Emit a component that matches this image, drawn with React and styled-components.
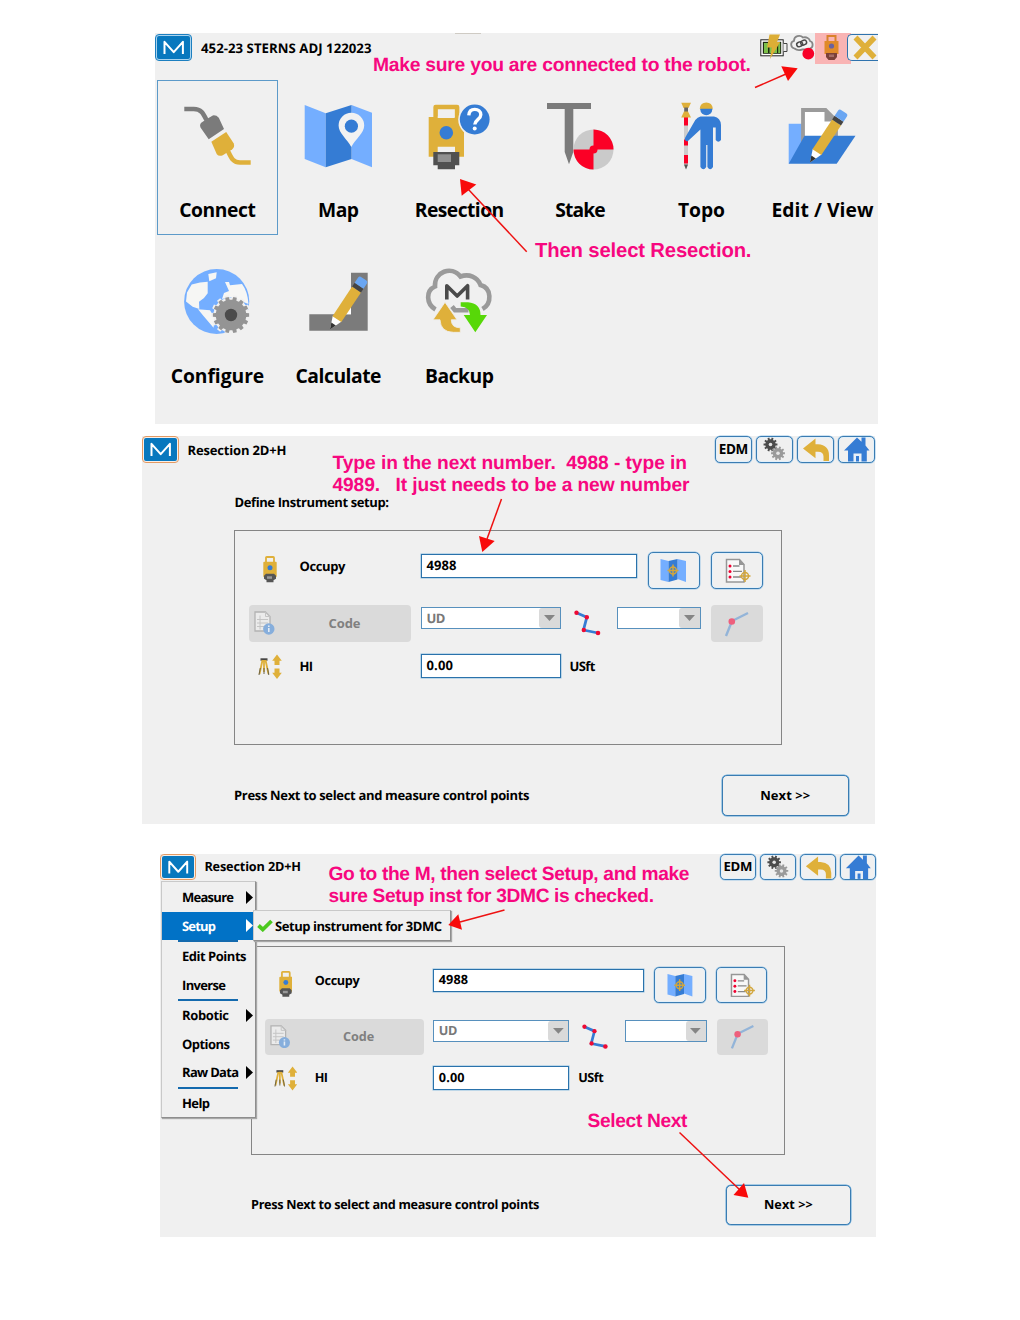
import React, { useLayoutEffect, useRef } from "react";
import styled, { createGlobalStyle, css } from "styled-components";

/* Lengths in a screen are multiples of its own unit, so a screen can be shown at any scale. */
const u = (n) => `calc(var(--u) * ${n})`;

const Global = createGlobalStyle`
  *, *::before, *::after { box-sizing: border-box; }
  body { margin: 0; background: #fff; }
  svg { display: block; flex: none; }
`;

const Page = styled.main`
  --u: 1px;
  position: relative;
  width: 1020px;
  height: 1320px;
  padding-top: 33px;
  overflow: hidden;
  font-family: "Open Sans", "Noto Sans", sans-serif;
  font-weight: 700;
  color: #000;
  text-rendering: geometricPrecision;
`;

const Panel = styled.section`
  --u: ${(p) => p.$scale || 1}px;
  position: relative;
  width: ${(p) => p.$w}px;
  height: ${(p) => p.$h}px;
  margin: 0 0 ${(p) => p.$after || 0}px ${(p) => p.$left}px;
  background: #f0f0f0;
`;

const TextSpan = styled.span`
  display: inline-block;
  flex: none;
  font-size: ${(p) => u(p.$size)};
  line-height: ${(p) => u(p.$line || 18)};
  white-space: pre;
  color: ${(p) => p.$color || "inherit"};
`;

/* Tracks a line of text so that it fills the given width. */
function Text({ size = 13, w, line, color, children }) {
  const ref = useRef(null);
  useLayoutEffect(() => {
    const el = ref.current;
    const fit = () => {
      el.style.letterSpacing = "0";
      const fs = parseFloat(getComputedStyle(el).fontSize);
      const n = Math.max(1, children.length - 1);
      const em = (w / size - el.getBoundingClientRect().width / fs) / n;
      el.style.letterSpacing = `${em.toFixed(4)}em`;
      el.style.marginRight = `${(-em).toFixed(4)}em`;
    };
    if (w) fit();
  }, [children, size, w]);
  return (
    <TextSpan ref={ref} $size={size} $line={line} $color={color}>
      {children}
    </TextSpan>
  );
}

/* ---------- header ---------- */

const Header = styled.header`
  display: flex;
  align-items: flex-start;
  justify-content: space-between;
  height: ${(p) => u(p.$h)};
`;
const Brand = styled.div`
  display: flex;
  align-items: center;
  gap: ${(p) => u(p.$gap || 9)};
  padding-top: ${(p) => u(p.$top || 0)};
`;
const LogoBox = styled.div`
  width: ${u(37)};
  height: ${u(27)};
  padding: 1px;
  border: 1px solid ${(p) => p.$ring};
  border-radius: ${u(4)};
  background: ${(p) => p.$gap};
  svg { width: 100%; height: 100%; background: #0878be; border-radius: 2px; }
`;
const Logo = ({ ring, gap }) => (
  <LogoBox $ring={ring} $gap={gap}>
    <svg viewBox="0 0 33 23" preserveAspectRatio="none">
      <path d="M7.500 18V5.800l9.200 10.400 9.200-10.400V18" fill="none" stroke="#fff" strokeWidth="2" strokeLinejoin="round" />
    </svg>
  </LogoBox>
);

const Tray = styled.div`
  display: flex;
  align-items: flex-start;
`;
const RobotTray = styled.div`
  display: flex;
  justify-content: center;
  width: 36px;
  height: 31px;
  background: #f9b4b4;
`;
const CloseButton = styled.button`
  width: 31px;
  height: 27px;
  margin: 1px 0 0 -4px;
  padding: 0;
  border: 1px solid #2f73ae;
  border-right: 0;
  border-radius: 5px 0 0 5px;
  background: #f0f0f0;
`;
const CrestMark = styled.i`
  position: absolute;
  left: 300px;
  top: 0;
  width: 26px;
  height: 1px;
  background: #cfcbc4;
`;

const Battery = () => (
  <svg width="28" height="31" viewBox="0 0 28 31">
    <rect x=".8" y="6.800" width="22.400" height="16" fill="#fff" stroke="#222" />
    <rect x="2.800" y="8.800" width="18.400" height="12" fill="#1d2a12" />
    <path d="M4 10h4v10H4zM9.500 10h3v10h-3zM14 10h3v10h-3zM18.200 10h2v10h-2z" fill="#7cc04a" />
    <path d="M23.500 10.500h3.500v8h-3.500" fill="#f0f0f0" stroke="#444" />
    <path d="M9.500 1.500h10.500l-3 7.500h3.200L10 26l1.800-11.500H7z" fill="#dcae36" />
  </svg>
);
const LinkCloud = () => (
  <svg width="27" height="31" viewBox="-1 0 27 31">
    <path d="M5.500 15.500C1.500 14.500.8 9 5 7.800 5 3 11 1.500 14 4.500c3.500-1 6.500 1 7 3.500 3.500 1 3.500 6.500 0 7.500-3 1.500-6 1-7.500.8-2.500 1-6 .8-8-.8z" fill="#f3f3f3" stroke="#868686" strokeWidth="1.800" />
    <g fill="none" stroke="#4a4a4a" strokeWidth="1.500" transform="rotate(-22 12.500 10.500)">
      <rect x="7.500" y="8.300" width="6" height="4.400" rx="2.200" />
      <rect x="11.800" y="8.300" width="6" height="4.400" rx="2.200" />
    </g>
    <circle cx="19.300" cy="20.700" r="5.900" fill="#f80028" />
  </svg>
);
const TrayRobot = () => (
  <svg width="22" height="30" viewBox="2 0 18 30">
    <path d="M5.500 9V3h8v6" fill="none" stroke="#d9822c" strokeWidth="2" />
    <path d="M2.500 8h14v13h-14z" fill="#e08a2a" />
    <circle cx="9.500" cy="13" r="2.600" fill="#6a62a0" />
    <path d="M4 20h11v4l-2.500 3h-6L4 24z" fill="#7b4038" />
    <rect x="7" y="21.500" width="5" height="2.500" fill="#a56c66" />
  </svg>
);

/* ---------- main menu icons (72 x 72) ---------- */

const BLUE = "#357cd4";
const SKY = "#74aeff";
const GOLD = "#dfb03a";
const GREY = "#7b7b7b";

const Icon72Box = styled.svg`
  margin-left: -2px;
`;
const Icon72 = ({ children }) => (
  <Icon72Box width="72" height="72" viewBox="0 0 72 72">{children}</Icon72Box>
);
const Pencil = ({ x, y }) => (
  <g transform={`translate(${x} ${y}) rotate(33.600)`}>
    <path d="M0 0l-5.300-13h10.600z" fill="#fff" />
    <path d="M0 0l-2.700-6.500h5.400z" fill="#333" />
    <path d="M-5.300-12.500h10.600V-48H-5.300z" fill={GOLD} />
    <path d="M-5.300-48h10.600v-4.500H-5.300z" fill="#444" />
    <path d="M-5.300-52.500v-6q0-2.500 2.500-2.500h5.600q2.500 0 2.500 2.500v6z" fill="#6aa6f2" />
  </g>
);
const ConnectIcon = () => (
  <Icon72>
    <path d="M3.300 9h9.500C20 9 22 13 25.500 20" fill="none" stroke={GREY} strokeWidth="4.600" />
    <path d="M27.700 39.300L19.500 27.500q-1.500-3.500 1.800-5.500l5-3.300 5.500-3.300q3.500-.5 6 2.300l5.200 11.300z" fill={GREY} />
    <path d="M30.300 41.800L45.200 32l7.600 11.500q1.200 3.500-1.500 5.800l-9.500 6q-4 1.500-6-1z" fill={GOLD} />
    <path d="M46.500 50c3.500 7 5 12.500 12.500 12.500h10.700" fill="none" stroke={GOLD} strokeWidth="4.600" />
  </Icon72>
);
const MapIcon = () => (
  <Icon72>
    <path d="M2.700 5l21 8.300v54L2.700 59zM49.500 5L70 12.700v54.600L49.500 59z" fill={SKY} />
    <path d="M23.700 13.300L49.500 5v54l-25.800 8.300z" fill={BLUE} />
    <path d="M49.300 47C45 39 36.600 33 36.600 25.500a12.800 12.800 0 0 1 25.600 0C62.200 33 53.500 39 49.300 47z" fill="#f2f2f2" />
    <circle cx="49.400" cy="26.200" r="6.600" fill={BLUE} />
  </Icon72>
);
const ResectionIcon = () => (
  <Icon72>
    <path d="M12.600 18V7h21.500v11" fill="none" stroke={GOLD} strokeWidth="4.500" strokeLinejoin="round" />
    <path d="M5.700 17H41v39.700H5.700z" fill={GOLD} />
    <path d="M14.700 16.500h17v1.500h-17zM14.700 46.700h17.300v6H14.700z" fill="#f0f0f0" />
    <circle cx="23.300" cy="32.700" r="6.800" fill={BLUE} />
    <path d="M10.300 52h26v13.300H32v4H14.700v-4h-4.400z" fill="#505050" />
    <path d="M14.700 54.300H28V62H14.700z" fill="#909090" />
    <circle cx="51.700" cy="19.500" r="16.500" fill="#f0f0f0" />
    <circle cx="51.700" cy="19.500" r="14.900" fill={BLUE} />
    <path d="M45.800 15.300c.3-4 2.700-5.900 6-5.900s6 2 6 5.300c0 4.800-6 5-6 9.800" fill="none" stroke="#fff" strokeWidth="3.400" />
    <circle cx="51.700" cy="28.600" r="2" fill="#fff" />
  </Icon72>
);
const StakeIcon = () => (
  <Icon72>
    <path d="M3 3h44v6H29.300v43L25 64.300 20.700 52V9H3z" fill={GREY} />
    <circle cx="49.500" cy="49.500" r="20" fill="#cacaca" />
    <path d="M49.500 49.500v-20a20 20 0 0 1 20 20zM49.500 49.500v20a20 20 0 0 1-20-20z" fill="#fb0026" />
    <circle cx="49.500" cy="49.500" r="4" fill="#fb0026" />
  </Icon72>
);
const TopoIcon = () => (
  <Icon72>
    <path d="M19 17h4v48l-2 4-2-4z" fill="#cdcdcd" />
    <path d="M19 17h4v8.500h-4zM19 39.500h4v6h-4zM19 55h4v8.500h-4z" fill="#fb0026" />
    <path d="M19 64.500h4l-2 5z" fill="#555" />
    <path d="M16.300 2.700H26L23.500 8h-5z" fill={GOLD} />
    <path d="M19.200 7.500H23V12h-3.800z" fill="#666" />
    <path d="M19 11.500h4l3 6h-9.800z" fill={GOLD} />
    <circle cx="41.300" cy="9.300" r="6" fill={BLUE} />
    <path d="M34.700 8.800q.8-6.200 6.600-6.200t6.600 6.200z" fill={GOLD} />
    <path d="M35.500 16.500H49q6.500 1 7 8.500v15q-2.700 3.500-5.300 0V27.500H48V67q-2.800 4.500-5.600 0V45h-1.200v22q-2.800 4.500-5.800 0V29.500l-13 12q-4-1-1.900-4.500L30.300 20q2.200-3 5.200-3.500z" fill={BLUE} />
  </Icon72>
);
const EditIcon = () => (
  <Icon72>
    <path d="M2.700 23.700H18v30L2.700 63.700z" fill={SKY} />
    <path d="M17 48V10h22.500l10.500 10.500V48z" fill="#fff" stroke="#9b9b9b" strokeWidth="3.800" />
    <path d="M38.500 9v12.500H51z" fill="#9b9b9b" />
    <path d="M18.500 35.700h51L50.700 63.700h-48z" fill={BLUE} />
    <Pencil x={24} y={62.500} />
  </Icon72>
);
const gearPath = (cx, cy, r, depth, n) => {
  const pts = [];
  for (let i = 0; i < n; i++) {
    [[-0.3, r - depth], [-0.22, r], [0.22, r], [0.3, r - depth]].forEach(([o, rr]) => {
      const a = ((i + o) / n) * Math.PI * 2;
      pts.push(`${(cx + rr * Math.cos(a)).toFixed(2)} ${(cy + rr * Math.sin(a)).toFixed(2)}`);
    });
  }
  return `M${pts.join("L")}z`;
};
const ConfigureIcon = () => (
  <Icon72>
    <circle cx="35.700" cy="35.500" r="32.600" fill={SKY} />
    <g fill="#f6f6f4">
      <path d="M19 16.500l7.700-.8v11.600L23 32l-5 3.700.3 7.300-6.600-2.300L5 35.500l1-9 4.700-8zM27.300 8l8.400-1.700L35 12.300l-6.700 3zM17 43.300l12 1 5 8-1.500 9.500-10-11.800zM44 16h4l1 3.200 12-1.200q5.500 7 6.500 20L49 31l-8 2 2-6 5-2z" />
    </g>
    <path d={gearPath(50, 49, 20, 2.4, 14)} fill="#f0f0f0" />
    <path d={gearPath(50, 49, 18.2, 2.9, 14)} fill="#949494" />
    <circle cx="50" cy="49" r="6.200" fill="#4b4b4b" />
  </Icon72>
);
const CalculateIcon = () => (
  <Icon72>
    <path d="M49 6.700h16.700v58H7.300V48.300H49z" fill={GREY} />
    <path d="M49 40v8.300h-7z" fill="#fff" />
    <Pencil x={28} y={63.5} />
  </Icon72>
);
const BackupIcon = () => (
  <Icon72>
    <path d="M12.500 43.500C3 38 2.500 24.500 12 20.500 11 6 28.500-1 37.500 10.500c8.500-3 17 .5 20 8.500C69 22 69 37.500 59.500 43M29 40.500l3 3.700h13.500" fill="none" stroke="#9a9a9a" strokeWidth="4.600" />
    <path d="M23.800 33.500V19.700l10.400 10.300L44.600 19.700v13.800" fill="none" stroke="#4a4a4a" strokeWidth="3.600" strokeLinejoin="round" />
    <path d="M22 36.300l12 17.500h-5.700q0 8 9 8v4.500h-7Q17.500 66 17 53.800h-7z" fill={GOLD} stroke="#f0f0f0" strokeWidth=".8" />
    <path d="M37.700 36.300H45q12.500 1 12.500 12.700H64L52.300 66.300 40.700 49H47q0-8-9.300-8.500z" fill="#57d808" />
  </Icon72>
);

/* ---------- main menu ---------- */

const Tiles = styled.div`
  display: grid;
  grid-template-columns: repeat(6, 121px);
  grid-auto-rows: 166px;
  padding-left: 2px;
`;
const Tile = styled.button`
  display: flex;
  flex-direction: column;
  align-items: center;
  gap: 24.500px;
  width: 121px;
  height: 155px;
  padding: 19px 0 0;
  border: 1px solid ${(p) => (p.$active ? "#5c9ac9" : "transparent")};
  background: none;
  font: inherit;
  color: inherit;
`;
const tiles = [
  ["Connect", 76.5, ConnectIcon],
  ["Map", 41, MapIcon],
  ["Resection", 89.5, ResectionIcon],
  ["Stake", 50.5, StakeIcon],
  ["Topo", 47, TopoIcon],
  ["Edit / View", 102, EditIcon],
  ["Configure", 93.5, ConfigureIcon],
  ["Calculate", 86, CalculateIcon],
  ["Backup", 69, BackupIcon],
];

function MainScreen() {
  return (
    <Panel $left={155} $w={723} $h={391} $after={12}>
      <CrestMark />
      <Header $h={47}>
        <Brand $top={1}>
          <Logo ring="#1c7fc0" gap="#a9d3ee" />
          <Text size={13.200} w={170.500}>452-23 STERNS ADJ 122023</Text>
        </Brand>
        <Tray>
          <Battery />
          <LinkCloud />
          <RobotTray><TrayRobot /></RobotTray>
          <CloseButton aria-label="Close">
            <svg width="30" height="25" viewBox="-1 0 30 25">
              <path d="M6.500 2.500L25.500 22.500M25.500 2.500L6.500 22.500" stroke={GOLD} strokeWidth="5.500" />
            </svg>
          </CloseButton>
        </Tray>
      </Header>
      <Tiles>
        {tiles.map(([name, w, Icon], i) => (
          <Tile key={name} $active={i === 0}>
            <Icon />
            <Text size={19.300} w={w} line={26}>{name}</Text>
          </Tile>
        ))}
      </Tiles>
    </Panel>
  );
}

/* ---------- resection screen ---------- */

const Tools = styled.div`
  display: flex;
  gap: ${u(4)};
`;
const outlined = css`
  display: flex;
  align-items: center;
  justify-content: center;
  padding: 0;
  border: 1px solid #3a7cb2;
  border-radius: ${u(5)};
  box-shadow: inset 0 0 0 1px #e2f0fa, 0 0 0 0.5px #9cc6e6;
  background: #f0f0f0;
  font: inherit;
  color: inherit;
`;
const ToolButton = styled.button`
  ${outlined}
  width: ${u(37)};
  height: ${u(26.5)};
  svg { width: ${u(35)}; height: ${u(26)}; }
`;
const Intro = styled.div`
  display: flex;
  align-items: center;
  height: ${u(18)};
  margin: 0 0 ${u(19)} ${u(92.5)};
`;
const Group = styled.div`
  display: flex;
  flex-direction: column;
  width: ${(p) => p.$w}px;
  height: ${u(214.5)};
  margin-left: ${(p) => p.$inset}px;
  padding: ${u(20.5)} 0 0 ${(p) => p.$pad}px;
  border: 1px solid #858585;
`;
const Row = styled.div`
  display: flex;
  align-items: flex-start;
  height: ${(p) => u(p.$h)};
`;
const Lead = styled.div`
  display: flex;
  align-items: center;
  width: ${u(172)};
  height: ${u(28)};
  margin-top: ${(p) => u(p.$top || 0)};
`;
const IconSlot = styled.div`
  display: flex;
  justify-content: center;
  width: ${u(42)};
  margin: ${(p) => u(p.$drop || 0)} ${u(9)} 0 0;
`;
const Glyph = styled.svg`
  width: ${(p) => u(p.$w)};
  height: ${(p) => u(p.$h)};
  margin: ${(p) => p.$m || 0};
`;
const CodeButton = styled.button`
  display: flex;
  align-items: center;
  width: ${u(162.500)};
  height: ${u(36.500)};
  margin-right: ${u(9.500)};
  padding: 0 0 0 ${u(5)};
  border: 0;
  border-radius: ${u(4)};
  background: #dadada;
  font: inherit;
  span { margin-left: ${u(54)}; }
`;
const Field = styled.div`
  display: flex;
  align-items: center;
  width: ${(p) => u(p.$w)};
  height: ${u(24)};
  margin-top: ${(p) => u(p.$top || 0)};
  padding: 0 0 ${u(1)} ${u(5)};
  border: 1px solid #2a72ab;
  box-shadow: 0 0 0 0.5px #8bbde0;
  background: #fff;
`;
const Select = styled.div`
  display: flex;
  align-items: center;
  justify-content: space-between;
  width: ${(p) => u(p.$w)};
  height: ${u(22)};
  margin-top: ${u(1.5)};
  padding-left: ${u(5)};
  border: 1px solid #5790bd;
  background: #fff;
`;
const Drop = styled.div`
  display: flex;
  align-items: center;
  justify-content: center;
  width: ${u(20.500)};
  height: 100%;
  margin-left: auto;
  border-radius: 3px 0 0 3px;
  background: #dadada;
`;
const SideButton = styled.button`
  ${outlined}
  width: ${u(52.500)};
  height: ${u(37)};
  margin-left: ${(p) => u(p.$gap)};
`;
const MutedButton = styled(SideButton)`
  border: 0;
  box-shadow: none;
  border-radius: ${u(4)};
  background: #dadada;
`;
const Footer = styled.footer`
  display: flex;
  align-items: center;
  justify-content: space-between;
  height: ${u(41.500)};
  margin: ${u(30)} ${u(26)} 0 ${(p) => p.$inset}px;
`;
const NextButton = styled.button`
  ${outlined}
  width: ${u(127.5)};
  height: ${u(41)};
  box-shadow: 0 0 0 0.5px #5fa5d8;
`;
const Unit = styled.div`
  display: flex;
  align-items: center;
  height: ${u(24)};
  margin-left: ${u(9)};
`;

const GearsIcon = () => (
  <svg viewBox="0 0 35 26">
    <path d={gearPath(13.5, 8.5, 7, 1.8, 10)} fill="#4c4c4c" />
    <circle cx="13.500" cy="8.500" r="1.800" fill="#e6e6e6" />
    <path d={gearPath(21, 17.3, 7, 1.8, 10)} fill="#9a9a9a" />
    <circle cx="21" cy="17.300" r="1.800" fill="#e6e6e6" />
  </svg>
);
const BackIcon = () => (
  <svg viewBox="0 0 35 26">
    <path d="M5 12.500L17.500 2.500v5.800h2.500Q31 9 31 19.500v5.500h-5.500V20.500q0-4.500-5.500-4.700h-2.500v6.500z" fill={GOLD} />
  </svg>
);
const HomeIcon = () => (
  <svg viewBox="0 0 35 26">
    <path d="M5 14.500L18 1.500l4.500 4.300V1.500h4v8l4 5h-2.700V25.500h-5.300v-8h-8v8H9V14.500z" fill={BLUE} />
    <path d="M15.300 18.300h6.400v7.200h-6.400z" fill="#e6f0fa" />
    <path d="M17 20h3v5.500h-3z" fill={BLUE} />
  </svg>
);
const RobotIcon = () => (
  <Glyph $w={14} $h={27} viewBox="0 0 14 27">
    <path d="M3 7V1.800q0-.8.8-.8h6.400q.8 0 .8.800V7" fill="none" stroke={GOLD} strokeWidth="1.800" />
    <rect x=".3" y="5.800" width="13.400" height="15.500" rx="1" fill={GOLD} />
    <circle cx="7" cy="11.800" r="2.500" fill={BLUE} />
    <path d="M3 17.800h8l2 2v3l-2.500 1.500v2h-7v-2L1 22.800v-3z" fill="#555" />
    <rect x="4" y="20.300" width="5" height="2.500" fill="#999" />
  </Glyph>
);
const HeightIcon = () => (
  <Glyph $w={24} $h={26} viewBox="0 0 24 26">
    <path d="M2.500 5.500h7" stroke="#444" strokeWidth="2.400" />
    <path d="M4.500 6L1.500 20M6 6v12M7.500 6l3 14" fill="none" stroke={GOLD} strokeWidth="1.800" />
    <path d="M2.300 14L1 21M6 14v6M9.500 14l1.300 7" fill="none" stroke="#6b6348" strokeWidth="1" />
    <path d="M19 .5l4.800 6.300H21.500V11h-5V6.800h-2.300zM19 25l4.800-6.300H21.500V14.500h-5v4.200h-2.300z" fill={GOLD} />
  </Glyph>
);
const CodeIcon = () => (
  <Glyph $w={21} $h={24} viewBox="0 0 21 24">
    <path d="M1 1h10.500l4.500 4.500V20H1z" fill="#ebebeb" stroke="#b3b3b3" strokeWidth="1.300" />
    <path d="M11.500 1v4.500H16zM3 8.500h11M3 12h11M3 15.500h8M6 4.500v14" fill="none" stroke="#c4c4c4" />
    <circle cx="14.800" cy="18" r="5.700" fill="#86aedc" />
    <path d="M14.800 17v4M14.800 14.500v1.500" stroke="#e4ecf5" strokeWidth="1.600" />
  </Glyph>
);
const Target = ({ x, y }) => (
  <g transform={`translate(${x} ${y})`} fill="none" stroke="#d2a63c" strokeWidth="1.500">
    <circle r="3.500" />
    <path d="M-5.500 0h11M0-6v12" />
  </g>
);
const MapTargetIcon = () => (
  <Glyph $w={27} $h={25} viewBox="0 0 27 25">
    <path d="M.5 1l8 2v21l-8-2zM17.500 1l8.500 2v21l-8.500-3z" fill={SKY} />
    <path d="M8.500 3l9-2v20.500l-9 2.500z" fill={BLUE} />
    <Target x={13} y={12.5} />
  </Glyph>
);
const ListTargetIcon = () => (
  <Glyph $w={26} $h={25} viewBox="0 0 26 25" $m="0 0 0 2px">
    <path d="M1.500 1.500h13l4.500 5V24H1.500z" fill="#f8f8f8" stroke="#969696" strokeWidth="1.500" />
    <path d="M14 1v6h5.500z" fill="#969696" />
    <path d="M8 8h6.500M8 13.300h9M8 19h8" stroke="#888" strokeWidth="1.300" />
    <g fill="#f00030"><circle cx="5" cy="8" r="1.500" /><circle cx="5" cy="13.500" r="1.500" /><circle cx="5" cy="19" r="1.500" /></g>
    <Target x={20} y={18} />
  </Glyph>
);
const PolylineIcon = () => (
  <Glyph $w={27} $h={26} viewBox="0 0 27 26" $m="5px 16px 0 13px">
    <path d="M2.500 2.800l10.300 4.500L9.500 20l14.500 3" fill="none" stroke={BLUE} strokeWidth="2.800" />
    <g fill="#ee0a34"><circle cx="2.500" cy="2.800" r="2.200" /><circle cx="12.800" cy="7.300" r="2.200" /><circle cx="9.800" cy="20" r="2.200" /><circle cx="24" cy="23" r="2.300" /></g>
  </Glyph>
);
const AngleIcon = () => (
  <Glyph $w={28} $h={28} viewBox="1 0 28 28">
    <path d="M4 26l6-15L26 3" fill="none" stroke="#93b4d8" strokeWidth="2.400" />
    <circle cx="9.800" cy="11.500" r="3.300" fill="#ee5f7c" />
  </Glyph>
);
const DropArrow = () => (
  <Glyph $w={11} $h={6} viewBox="0 0 11 6"><path d="M0 0h11L5.500 6z" fill="#858585" /></Glyph>
);

function ResectionScreen({ panel, group, intro, children }) {
  return (
    <Panel {...panel}>
      <Header $h={57}>
        <Brand $gap={8.5}>
          <Logo ring="#e39a63" gap="#f8efe8" />
          <Text size={13} w={99}>Resection 2D+H</Text>
        </Brand>
        <Tools>
          <ToolButton><Text size={13.500} w={29.500}>EDM</Text></ToolButton>
          <ToolButton aria-label="Settings"><GearsIcon /></ToolButton>
          <ToolButton aria-label="Back"><BackIcon /></ToolButton>
          <ToolButton aria-label="Home"><HomeIcon /></ToolButton>
        </Tools>
      </Header>
      <Intro>{intro && <Text size={13} w={154.500}>{intro}</Text>}</Intro>
      <Group {...group}>
        <Row $h={53.5}>
          <Lead>
            <IconSlot $drop={8}><RobotIcon /></IconSlot>
            <Text size={13} w={46}>Occupy</Text>
          </Lead>
          <Field $w={216.5} $top={2}><Text size={13} w={30}>4988</Text></Field>
          <SideButton $gap={10.500} aria-label="Pick on map"><MapTargetIcon /></SideButton>
          <SideButton $gap={10.500} aria-label="Pick from list"><ListTargetIcon /></SideButton>
        </Row>
        <Row $h={48.5}>
          <CodeButton>
            <CodeIcon />
            <Text size={13} w={32} color="#808080">Code</Text>
          </CodeButton>
          <Select $w={140}>
            <Text size={13} w={19} color="#787878">UD</Text>
            <Drop><DropArrow /></Drop>
          </Select>
          <PolylineIcon />
          <Select $w={84}><Drop><DropArrow /></Drop></Select>
          <MutedButton $gap={10} aria-label="Angle"><AngleIcon /></MutedButton>
        </Row>
        <Row $h={28}>
          <Lead $top={-2}>
            <IconSlot $drop={2}><HeightIcon /></IconSlot>
            <Text size={13} w={13.5}>HI</Text>
          </Lead>
          <Field $w={140}><Text size={13} w={26.500}>0.00</Text></Field>
          <Unit><Text size={13} w={26}>USft</Text></Unit>
        </Row>
      </Group>
      <Footer $inset={group.$inset}>
        <Text size={13} w={295.500}>Press Next to select and measure control points</Text>
        <NextButton><Text size={13} w={50}>{"Next >>"}</Text></NextButton>
      </Footer>
      {children}
    </Panel>
  );
}

/* ---------- drop-down menu ---------- */

const raised = css`
  position: absolute;
  background: #f0f0f0;
  border: 1px solid #c9c9c9;
  border-right-color: #8e8e8e;
  border-bottom-color: #8e8e8e;
  box-shadow: 1px 1px 1px #a8a8a8;
`;
const Menu = styled.nav`
  ${raised}
  --u: 1px;
  left: 1px;
  top: 27px;
  width: 95px;
  height: 237px;
  padding: 1px 2px 0 0;
`;
const MenuItem = styled.div`
  display: flex;
  align-items: center;
  justify-content: space-between;
  height: 28.5px;
  padding-left: 20px;
  background: ${(p) => (p.$on ? "#0172c6" : "none")};
  color: ${(p) => (p.$on ? "#fff" : "#000")};
`;
const MenuRule = styled.div`
  width: 60px;
  height: 2px;
  margin-left: 16px;
  background: #146aae;
`;
const SubMenu = styled.div`
  ${raised}
  --u: 1px;
  left: 93px;
  top: 55.5px;
  display: flex;
  align-items: center;
  gap: 2px;
  width: 198px;
  height: 31px;
  padding: 1px 0 0 3px;
`;
const Caret = () => (
  <svg width="7" height="13" viewBox="0 0 7 13"><path d="M0 0l7 6.500L0 13z" fill="currentColor" /></svg>
);
const menu = [
  ["Measure", 52, true],
  ["Setup", 34, true],
  null,
  ["Edit Points", 64.5],
  ["Inverse", 44],
  null,
  ["Robotic", 47, true],
  ["Options", 48],
  ["Raw Data", 57, true],
  null,
  ["Help", 28],
];

/* ---------- notes over the screens ---------- */

const Note = styled.p`
  position: absolute;
  left: ${(p) => p.$x}px;
  top: ${(p) => p.$y}px;
  display: flex;
  flex-direction: column;
  align-items: flex-start;
  margin: 0;
  font-family: "Liberation Sans", Arial, sans-serif;
  color: #f7077f;
`;
const Arrows = styled.svg`
  position: absolute;
  left: 0;
  top: 0;
  pointer-events: none;
`;
const arrows = [
  ["M755 87.500L786 74", "M797.700 68.300L781.300 66.300 788 81z"],
  ["M526.700 251.700L468 189", "M460 179l16.300 5.500-14.600 11.200z"],
  ["M501.500 499L487 539", "M482.300 552L479 536l15.700 5z"],
  ["M504.500 910L460 922", "M448.300 925l10-10.700 3.700 15.400z"],
  ["M679.500 1132.500L740 1190", "M748.300 1197.700L744 1183l-10.500 12z"],
];

export default function App() {
  return (
    <Page>
      <Global />
      <MainScreen />
      <ResectionScreen
        panel={{ $left: 142, $w: 733, $h: 388, $after: 30 }}
        group={{ $inset: 92, $pad: 13.5, $w: 548 }}
        intro="Define Instrument setup:"
      />
      <ResectionScreen
        panel={{ $left: 160, $w: 716, $h: 383, $scale: 0.976 }}
        group={{ $inset: 91, $pad: 13, $w: 534 }}
      >
        <Menu>
          {menu.map((m, i) =>
            m ? (
              <MenuItem key={i} $on={m[0] === "Setup"}>
                <Text size={13} w={m[1]}>{m[0]}</Text>
                {m[2] && <Caret />}
              </MenuItem>
            ) : (
              <MenuRule key={i} />
            )
          )}
        </Menu>
        <SubMenu>
          <svg width="16" height="13" viewBox="0 0 16 13">
            <path d="M1.500 6.500l4.300 4L14.500 2" fill="none" stroke="#4bc91e" strokeWidth="3.800" />
          </svg>
          <Text size={13} w={167}>Setup instrument for 3DMC</Text>
        </SubMenu>
      </ResectionScreen>
      <Arrows width="1020" height="1320" viewBox="0 0 1020 1320">
        {arrows.map(([line, head]) => (
          <g key={line} fill="#f80a0a">
            <path d={line} fill="none" stroke="#ee1111" strokeWidth="1.500" />
            <path d={head} />
          </g>
        ))}
      </Arrows>
      <Note $x={373} $y={55}>
        <Text size={19.300} w={378} line={22}>Make sure you are connected to the robot.</Text>
      </Note>
      <Note $x={535} $y={240}>
        <Text size={20.300} w={216.5} line={22}>Then select Resection.</Text>
      </Note>
      <Note $x={332.5} $y={452.5}>
        <Text size={19.200} w={354.500} line={22}>{"Type in the next number.  4988 - type in"}</Text>
        <Text size={19.200} w={357} line={22}>{"4989.   It just needs to be a new number"}</Text>
      </Note>
      <Note $x={328.5} $y={864}>
        <Text size={19.200} w={361} line={21.500}>Go to the M, then select Setup, and make</Text>
        <Text size={19.200} w={325.500} line={21.500}>sure Setup inst for 3DMC is checked.</Text>
      </Note>
      <Note $x={587.5} $y={1111}>
        <Text size={19.200} w={100} line={22}>Select Next</Text>
      </Note>
    </Page>
  );
}
